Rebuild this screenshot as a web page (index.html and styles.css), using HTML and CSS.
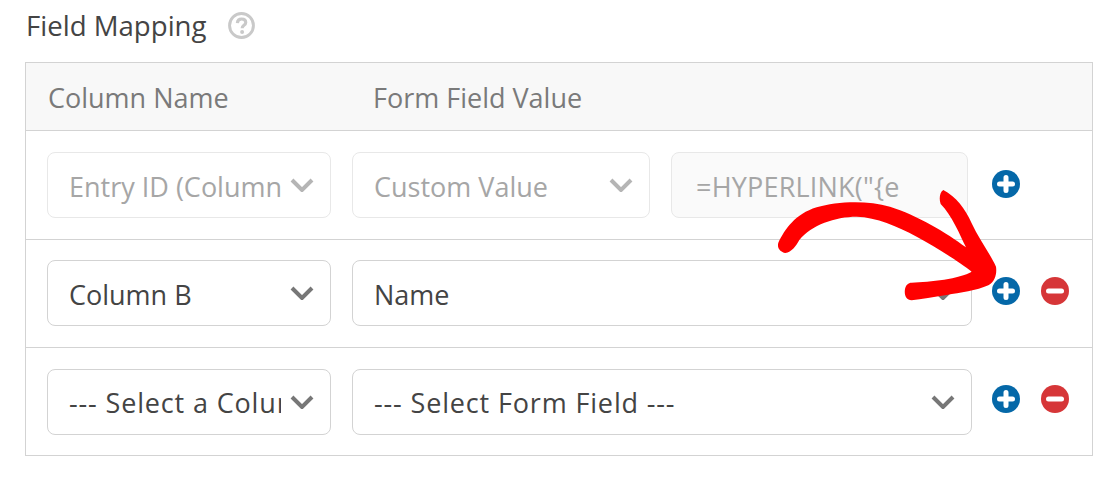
FILE: index.html
```html
<!DOCTYPE html>
<html lang="en">
<head>
<meta charset="utf-8">
<title>Field Mapping</title>
<link rel="stylesheet" href="styles.css">
</head>
<body>
<div class="page">
  <div class="title">
    <span class="title-text">Field Mapping</span>
    <svg class="help" viewBox="0 0 26 26" aria-hidden="true">
      <circle cx="13" cy="13" r="11.5" fill="none" stroke="#c9c9c9" stroke-width="2.8"/>
      <path d="M9 10.6c.2-2.5 1.9-3.8 4.1-3.8 2.4 0 4 1.3 4 3.3 0 2.8-3.5 2.7-3.5 5.5" fill="none" stroke="#c9c9c9" stroke-width="3"/>
      <circle cx="13.6" cy="19.2" r="1.9" fill="#c9c9c9"/>
    </svg>
  </div>
  <div class="table">
    <div class="head">
      <span class="col-name">Column Name</span>
      <span class="col-value">Form Field Value</span>
    </div>
    <div class="row row-first">
      <select class="field col-a" disabled><option>Entry ID (Column A)</option></select>
      <select class="field col-b" disabled><option>Custom Value</option></select>
      <input class="field col-c" disabled value='=HYPERLINK("{e'>
      <div class="actions">
        <svg class="icon" viewBox="0 0 28 28" aria-hidden="true"><circle cx="14" cy="14" r="14" fill="#0568a8"/><path d="M14 7.5v13M7.5 14h13" stroke="#fff" stroke-width="5" stroke-linecap="round"/></svg>
      </div>
    </div>
    <div class="row row-middle">
      <select class="field col-a"><option>Column B</option></select>
      <select class="field col-wide"><option>Name</option></select>
      <div class="actions">
        <svg class="icon" viewBox="0 0 28 28" aria-hidden="true"><circle cx="14" cy="14" r="14" fill="#0568a8"/><path d="M14 7.5v13M7.5 14h13" stroke="#fff" stroke-width="5" stroke-linecap="round"/></svg>
        <svg class="icon" viewBox="0 0 28 28" aria-hidden="true"><circle cx="14" cy="14" r="14" fill="#d63638"/><path d="M7.5 14h13" stroke="#fff" stroke-width="5" stroke-linecap="round"/></svg>
      </div>
    </div>
    <div class="row row-last">
      <select class="field col-a placeholder"><option>--- Select a Column ---</option></select>
      <select class="field col-wide placeholder"><option>--- Select Form Field ---</option></select>
      <div class="actions">
        <svg class="icon" viewBox="0 0 28 28" aria-hidden="true"><circle cx="14" cy="14" r="14" fill="#0568a8"/><path d="M14 7.5v13M7.5 14h13" stroke="#fff" stroke-width="5" stroke-linecap="round"/></svg>
        <svg class="icon" viewBox="0 0 28 28" aria-hidden="true"><circle cx="14" cy="14" r="14" fill="#d63638"/><path d="M7.5 14h13" stroke="#fff" stroke-width="5" stroke-linecap="round"/></svg>
      </div>
    </div>
  </div>
  <svg class="arrow" viewBox="0 0 1320 600" aria-hidden="true">
    <path fill="#ff0000" d="M355 308C375 268 405 222 470 202C530 184 620 180 690 200C770 225 860 278 918 322C900 285 875 225 842 192C836 175 840 155 850 150C888 170 915 205 935 250C955 295 990 340 1008 380C1011 400 1006 424 985 436C950 452 900 458 860 465C820 471 785 478 755 481C738 480 732 464 735 447C737 435 745 428 755 428C810 426 900 416 935 395C900 368 830 322 770 290C710 258 650 232 590 230C525 230 455 255 418 300C408 318 395 336 376 339C362 336 350 325 355 308Z"/>
  </svg>
</div>
</body>
</html>
```

FILE: styles.css
```css
* { box-sizing: border-box; }

html, body {
  margin: 0;
  padding: 0;
  background: #fff;
}

body {
  font-family: "Open Sans", "Noto Sans", sans-serif;
  color: #444;
}

.page {
  position: relative;
  width: 1116px;
  height: 479px;
  padding-left: 25px;
  overflow: hidden;
}

.title {
  display: flex;
  align-items: center;
  gap: 21px;
  height: 62px;
  padding: 0 0 11px 1px;
  font-size: 27.6px;
  line-height: 36px;
}

.title-text {
  margin-top: -2px;
}

.help {
  width: 27px;
  height: 27px;
}

.table {
  width: 1068px;
  height: 394px;
  border: 1px solid #d3d3d3;
}

.head {
  display: flex;
  align-items: center;
  height: 68px;
  padding: 2px 0 0 22px;
  background: #f8f8f8;
  border-bottom: 1px solid #d3d3d3;
  color: #7a7a7a;
  font-size: 27px;
}

.col-name { width: 325px; }

.row {
  display: flex;
  align-items: flex-start;
  gap: 21px;
  padding-left: 21px;
  padding-right: 23px;
  border-bottom: 1px solid #d3d3d3;
}

.row-first { height: 109px; padding-top: 21px; }
.row-middle { height: 108px; padding-top: 20px; }
.row-last { height: 107px; padding-top: 21px; border-bottom: 0; }

.field {
  flex: none;
  height: 66px;
  padding: 3px 21px 0 21px;
  background-color: #fff;
  border: 1px solid #d3d3d3;
  border-radius: 8px;
  color: #444;
  font: 27px "Open Sans", "Noto Sans", sans-serif;
  appearance: none;
  -webkit-appearance: none;
  outline: 0;
}

select.field {
  padding-right: 49px;
  background-image: url("data:image/svg+xml,%3Csvg xmlns='http://www.w3.org/2000/svg' width='24' height='14' viewBox='0 0 24 14'%3E%3Cpath d='M2 2l10 10L22 2' fill='none' stroke='%23777' stroke-width='4'/%3E%3C/svg%3E");
  background-repeat: no-repeat;
  background-position: right 16px center;
}

.placeholder {
  padding-top: 1px;
  letter-spacing: 0.85px;
}

.field:disabled {
  border-color: #e8e8e8;
  color: #a6a6a6;
  opacity: 1;
}

select.field:disabled {
  background-image: url("data:image/svg+xml,%3Csvg xmlns='http://www.w3.org/2000/svg' width='24' height='14' viewBox='0 0 24 14'%3E%3Cpath d='M2 2l10 10L22 2' fill='none' stroke='%23b5b5b5' stroke-width='4'/%3E%3C/svg%3E");
}

input.field:disabled {
  padding-left: 24px;
  letter-spacing: 0.2px;
  background: #fafafa;
}

.col-a { width: 284px; }
.col-b { width: 298px; }
.col-c { width: 297px; }
.col-wide { width: 620px; margin-right: -1px; }

.actions {
  display: flex;
  gap: 21px;
  width: 77px;
  margin-left: auto;
}

.row-first .actions { margin-top: 18px; }
.row-middle .actions { margin-top: 17px; }
.row-last .actions { margin-top: 16px; }

.icon {
  display: block;
  width: 28px;
  height: 28px;
}

.arrow {
  position: absolute;
  left: 660px;
  top: 140px;
  width: 440px;
  height: 200px;
}
```
